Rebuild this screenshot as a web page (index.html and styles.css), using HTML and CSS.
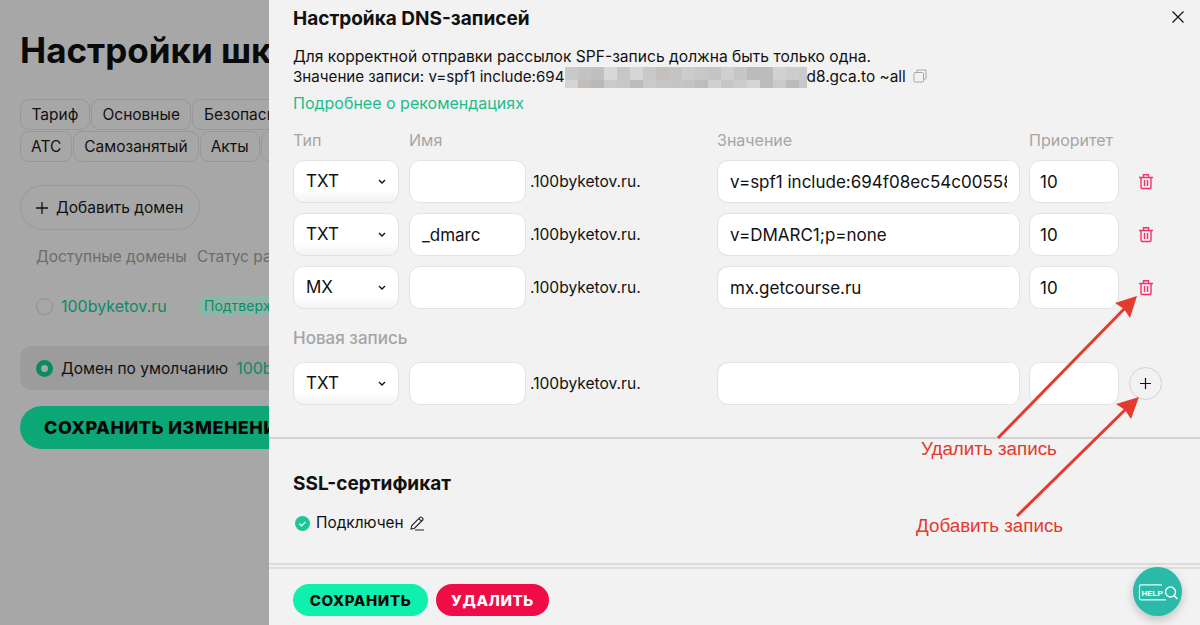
FILE: index.html
```html
<!DOCTYPE html>
<html lang="ru">
<head>
<meta charset="utf-8">
<title>Настройка DNS-записей</title>
<link rel="stylesheet" href="styles.css">
</head>
<body>
<div class="screen">
  <aside class="backdrop">
    <div class="backdrop-inner">
      <h1 class="page-title">Настройки школы</h1>
      <div class="chips">
        <div class="chip-row"><span class="chip">Тариф</span><span class="chip">Основные</span><span class="chip">Безопасность</span></div>
        <div class="chip-row"><span class="chip">АТС</span><span class="chip">Самозанятый</span><span class="chip">Акты</span><span class="chip">Домены</span></div>
      </div>
      <div class="add-domain"><svg width="12" height="12" viewBox="0 0 12 12"><path d="M6 0v12M0 6h12" stroke="#111" stroke-width="1.300"/></svg> Добавить домен</div>
      <div class="domain-head"><span class="domain-col">Доступные домены</span><span>Статус рассылок</span></div>
      <div class="domain-row">
        <span class="domain-col domain-name"><span class="radio"></span><span class="green-text">100byketov.ru</span></span>
        <span class="badge">Подтверждён</span>
      </div>
      <div class="default-row"><span class="radio radio-on"></span>Домен по умолчанию <span class="green-text">100byketov.ru</span></div>
      <div class="save-all">СОХРАНИТЬ ИЗМЕНЕНИЯ</div>
    </div>
  </aside>

  <main class="panel">
    <section class="dns">
      <h2 class="panel-title">Настройка DNS-записей</h2>
      <p class="note note-lead">Для корректной отправки рассылок SPF-запись должна быть только одна.</p>
      <p class="note">Значение записи: v=spf1 include:694<svg class="mosaic" width="242" height="21" viewBox="0 0 242 21" aria-hidden="true">
        <rect width="242" height="21" fill="#c8c8c8"/>
        <rect x="0" width="13" height="13" fill="#c9c9c9"/><rect x="13" width="13" height="13" fill="#c5c3c1"/><rect x="26" width="13" height="13" fill="#bfc0c0"/><rect x="39" width="13" height="13" fill="#d8d8d8"/><rect x="52" width="13" height="13" fill="#c9c7c5"/><rect x="65" width="13" height="13" fill="#d6d6d6"/><rect x="78" width="13" height="13" fill="#c8c9cb"/><rect x="91" width="13" height="13" fill="#c3c0be"/><rect x="104" width="13" height="13" fill="#c5c4c3"/><rect x="117" width="13" height="13" fill="#cccccc"/><rect x="130" width="13" height="13" fill="#c6c7c9"/><rect x="143" width="13" height="13" fill="#c4c5c7"/><rect x="156" width="13" height="13" fill="#d0cfcd"/><rect x="169" width="13" height="13" fill="#c5c6c6"/><rect x="182" width="13" height="13" fill="#bdbab8"/><rect x="195" width="13" height="13" fill="#bcbcbc"/><rect x="208" width="13" height="13" fill="#d2d2d2"/><rect x="221" width="13" height="13" fill="#cdcdcd"/><rect x="234" width="8" height="13" fill="#c8cacb"/>
        <rect x="0" y="13" width="13" height="8" fill="#d4d4d4"/><rect x="13" y="13" width="13" height="8" fill="#c0bdbb"/><rect x="26" y="13" width="13" height="8" fill="#b8b9b9"/><rect x="39" y="13" width="13" height="8" fill="#c8cacb"/><rect x="52" y="13" width="13" height="8" fill="#c8c8c8"/><rect x="65" y="13" width="13" height="8" fill="#bcbcbc"/><rect x="78" y="13" width="13" height="8" fill="#c8cacc"/><rect x="91" y="13" width="13" height="8" fill="#c8c6c4"/><rect x="104" y="13" width="13" height="8" fill="#c6c5c4"/><rect x="117" y="13" width="13" height="8" fill="#c2c3c3"/><rect x="130" y="13" width="13" height="8" fill="#bcbdbd"/><rect x="143" y="13" width="13" height="8" fill="#d0d0d0"/><rect x="156" y="13" width="13" height="8" fill="#c8c6c3"/><rect x="169" y="13" width="13" height="8" fill="#cccccc"/><rect x="182" y="13" width="13" height="8" fill="#d6d5d3"/><rect x="195" y="13" width="13" height="8" fill="#bcbcbc"/><rect x="208" y="13" width="13" height="8" fill="#c8cacb"/><rect x="221" y="13" width="13" height="8" fill="#bdbbb9"/><rect x="234" y="13" width="8" height="8" fill="#c8c8c8"/>
      </svg><span class="note-tail">d8.gca.to ~all</span><svg class="copy-icon" width="14" height="14" viewBox="0 0 14 14" aria-hidden="true"><path d="M4 3V1h9v9h-2" fill="none" stroke="#a9a9a9"/><rect x="1" y="3.500" width="9.500" height="9.500" rx="1" fill="none" stroke="#a9a9a9"/></svg></p>
      <a class="more-link" href="#">Подробнее о рекомендациях</a>

      <div class="dns-grid labels">
        <span>Тип</span><span>Имя</span><span>Значение</span><span>Приоритет</span><span></span>
      </div>

      <div class="dns-grid record">
        <div class="field select">TXT<svg class="chevron" width="8" height="5" viewBox="0 0 8 5"><path d="M1 1l3 3 3-3" fill="none" stroke="#111" stroke-width="1.400"/></svg></div>
        <div class="name-cell"><div class="field name"></div><span class="suffix">.100byketov.ru.</span></div>
        <div class="field value">v=spf1 include:694f08ec54c00558</div>
        <div class="field prio">10</div>
        <div class="action"><svg class="trash" width="14" height="16" viewBox="0 0 14 16"><path d="M0 3.500h14M4.500 3.500V.700h5v2.800M2 3.500v9.500a1.500 1.500 0 0 0 1.500 1.500h7a1.500 1.500 0 0 0 1.500-1.500V3.500M5.500 6v6M8.500 6v6" fill="none" stroke="#f5306a" stroke-width="1.400"/></svg></div>
      </div>
      <div class="dns-grid record">
        <div class="field select">TXT<svg class="chevron" width="8" height="5" viewBox="0 0 8 5"><path d="M1 1l3 3 3-3" fill="none" stroke="#111" stroke-width="1.400"/></svg></div>
        <div class="name-cell"><div class="field name">_dmarc</div><span class="suffix">.100byketov.ru.</span></div>
        <div class="field value">v=DMARC1;p=none</div>
        <div class="field prio">10</div>
        <div class="action"><svg class="trash" width="14" height="16" viewBox="0 0 14 16"><path d="M0 3.500h14M4.500 3.500V.700h5v2.800M2 3.500v9.500a1.500 1.500 0 0 0 1.500 1.500h7a1.500 1.500 0 0 0 1.500-1.500V3.500M5.500 6v6M8.500 6v6" fill="none" stroke="#f5306a" stroke-width="1.400"/></svg></div>
      </div>
      <div class="dns-grid record">
        <div class="field select">MX<svg class="chevron" width="8" height="5" viewBox="0 0 8 5"><path d="M1 1l3 3 3-3" fill="none" stroke="#111" stroke-width="1.400"/></svg></div>
        <div class="name-cell"><div class="field name"></div><span class="suffix">.100byketov.ru.</span></div>
        <div class="field value">mx.getcourse.ru</div>
        <div class="field prio">10</div>
        <div class="action"><svg class="trash" width="14" height="16" viewBox="0 0 14 16"><path d="M0 3.500h14M4.500 3.500V.700h5v2.800M2 3.500v9.500a1.500 1.500 0 0 0 1.500 1.500h7a1.500 1.500 0 0 0 1.500-1.500V3.500M5.500 6v6M8.500 6v6" fill="none" stroke="#f5306a" stroke-width="1.400"/></svg></div>
      </div>

      <div class="new-label">Новая запись</div>
      <div class="dns-grid record">
        <div class="field select">TXT<svg class="chevron" width="8" height="5" viewBox="0 0 8 5"><path d="M1 1l3 3 3-3" fill="none" stroke="#111" stroke-width="1.400"/></svg></div>
        <div class="name-cell"><div class="field name"></div><span class="suffix">.100byketov.ru.</span></div>
        <div class="field value"></div>
        <div class="field prio"></div>
        <div class="action"><span class="add-round"><svg width="11" height="11" viewBox="0 0 11 11"><path d="M5.500 0v11M0 5.500h11" stroke="#111" stroke-width="1.200"/></svg></span></div>
      </div>
    </section>

    <section class="ssl">
      <h3 class="ssl-title">SSL-сертификат</h3>
      <div class="ssl-status">
        <svg width="15" height="15" viewBox="0 0 15 15"><circle cx="7.500" cy="7.500" r="7.500" fill="#1cc795"/><path d="M4.500 7.800l2.100 2 3.900-4" fill="none" stroke="#fff" stroke-width="1.200"/></svg>
        <span>Подключен</span>
        <svg width="15" height="15" viewBox="0 0 15 15"><path d="M1 13l.8-3.500L10 1.300a1.200 1.200 0 0 1 1.700 0l1 1a1.200 1.200 0 0 1 0 1.700L4.500 12.200zM8.800 2.600l2.600 2.600M5 14h9" fill="none" stroke="#222" stroke-width="1.100"/></svg>
      </div>
    </section>

    <footer class="actions">
      <button class="btn btn-save">СОХРАНИТЬ</button>
      <button class="btn btn-delete">УДАЛИТЬ</button>
    </footer>
  </main>

  <button class="close" aria-label="Закрыть"><svg width="12" height="12" viewBox="0 0 12 12"><path d="M.5.500l11 11M11.500.500l-11 11" stroke="#111" stroke-width="1.200"/></svg></button>

  <svg class="arrows" width="1200" height="625" viewBox="0 0 1200 625" aria-hidden="true">
    <path d="M998 438L1127 306" stroke="#e53b2e" stroke-width="3" fill="none"/>
    <path d="M1137 296L1130 318L1124 309L1115 303Z" fill="#e53b2e"/>
    <path d="M1017 516L1130 405" stroke="#e53b2e" stroke-width="3" fill="none"/>
    <path d="M1139 397L1131 419L1125 410L1116 404Z" fill="#e53b2e"/>
  </svg>
  <span class="callout callout-del">Удалить запись</span>
  <span class="callout callout-add">Добавить запись</span>

  <button class="help" aria-label="Помощь">
    <svg width="40" height="24" viewBox="0 0 40 24"><path d="M24 4.800H3A1.500 1.500 0 0 0 1.500 6.300v12A1.500 1.500 0 0 0 3 19.800h25" fill="none" stroke="#e8fbf8" stroke-width="1.200"/><circle cx="32.500" cy="12" r="5" fill="none" stroke="#fff" stroke-width="1.400"/><path d="M36 15.500l3.500 3.500" stroke="#fff" stroke-width="1.400"/><text x="3.500" y="15.500" class="help-text">HELP</text></svg>
  </button>
</div>
</body>
</html>
```

FILE: styles.css
```css
* { box-sizing: border-box; }
html, body { margin: 0; height: 100%; }
body { font-family: Inter, "Noto Sans", sans-serif; color: #111; overflow: hidden; }
.screen { display: flex; width: 1200px; height: 625px; overflow: hidden; position: relative; }
h1, h2, h3, p { margin: 0; }

/* dimmed page behind the drawer */
.backdrop { width: 269px; flex: none; background: #a7a7a7; overflow: hidden; }
.backdrop-inner { width: 800px; padding: 29px 0 0 20px; font-size: 15.500px; white-space: nowrap; }
.page-title { font-size: 35px; line-height: 42px; font-weight: 700; color: #0a0a0a; }
.chips { margin-top: 28px; display: flex; flex-direction: column; gap: 1px; }
.chip-row { display: flex; gap: 1px; }
.chip { height: 31px; line-height: 29px; padding: 0 10px; border: 1px solid #979797; border-radius: 9px; }
.chip-row:first-child .chip { padding: 0 10.500px; }
.add-domain { margin-top: 23px; width: 180px; height: 45px; display: flex; align-items: center; gap: 8px; padding-left: 15px; border: 1px solid #999; border-radius: 23px; }
.domain-head { margin-top: 17px; display: flex; line-height: 20px; padding-left: 16px; color: #6c6c6c; }
.domain-col { width: 161px; flex: none; }
.domain-row { margin-top: 29px; display: flex; align-items: center; height: 20px; padding-left: 16px; }
.domain-name { display: flex; align-items: center; gap: 8px; }
.radio { width: 17px; height: 17px; flex: none; border: 1px solid #8f8f8f; border-radius: 50%; }
.radio-on { border: 5px solid #0c8a66; background: #a7a7a7; }
.green-text { color: #0d8a67; font-size: 16px; }
.badge { background: #8fb5a7; color: #0d8a67; height: 20px; line-height: 20px; padding: 0 7px; border-radius: 10px; font-size: 14px; }
.default-row { margin-top: 30px; width: 500px; height: 44px; display: flex; align-items: center; gap: 8px; padding-left: 16px; background: #9c9c9c; border-radius: 12px; }
.save-all { margin-top: 16px; width: 420px; height: 43px; line-height: 43px; padding-left: 24px; background: #0ca777; border-radius: 22px; font-size: 18px; font-weight: 800; letter-spacing: .5px; color: #050505; }

/* drawer */
.panel { flex: 1; height: 625px; background: #f2f2f2; display: flex; flex-direction: column; }
.dns { padding: 8px 0 32px 24px; border-bottom: 2px solid #d2d2d2; }
.panel-title { font-size: 19px; line-height: 22px; font-weight: 700; }
.note { font-size: 15.150px; line-height: 20px; height: 20px; white-space: nowrap; color: #111; }
.note-lead { font-size: 15.600px; margin-top: 17px; }
.note-tail { font-size: 15.400px; }
.mosaic { vertical-align: -6px; }
.copy-icon { margin-left: 7px; vertical-align: -1px; }
.more-link { display: block; margin-top: 6px; font-size: 16px; line-height: 20px; color: #1cbd8c; text-decoration: none; }
.dns-grid { display: grid; grid-template-columns: 106px 298px 302px 90px 33px; column-gap: 10px; }
.labels { margin-top: 17px; font-size: 16px; line-height: 20px; color: #a5a5a5; margin-bottom: 10px; }
.record { height: 43px; margin-bottom: 10px; }
.field { height: 43px; line-height: 43px; padding: 0 12px; background: #fff; border: 1px solid #e2e2e2; border-radius: 11px; font-size: 17px; overflow: hidden; white-space: nowrap; }
.select { display: flex; align-items: center; justify-content: space-between; padding-right: 12px; background: linear-gradient(#fff 70%, #f3f3f3); }
.prio { padding-left: 10px; }
.name-cell { display: flex; align-items: center; gap: 4px; }
.name { width: 117px; flex: none; }
.suffix { font-size: 15.600px; }
.value { padding-right: 0; border-right-width: 12px; border-right-color: #fff; box-shadow: 1px 0 0 #e2e2e2; }
.action { display: flex; align-items: center; justify-content: center; }
.trash { display: block; }
.add-round { width: 33px; height: 33px; display: flex; align-items: center; justify-content: center; border: 1px solid #d2d2d2; border-radius: 50%; }
.new-label { margin-top: 19px; margin-bottom: 14px; font-size: 17px; line-height: 20px; font-weight: 500; color: #a5a5a5; }
.new-label + .record { margin-bottom: 0; }

.ssl { padding: 33px 0 0 24px; border-bottom: 2px solid #dcdcdc; height: 126px; }
.ssl-title { font-size: 19px; line-height: 24px; font-weight: 700; }
.ssl-status { margin-top: 17px; display: flex; align-items: center; gap: 6px; font-size: 15.400px; line-height: 20px; padding-left: 2px; }
.actions { margin-top: 2px; border-top: 2px solid #dfdfdf; padding: 15px 0 0 24px; display: flex; gap: 8px; }
.btn { height: 32px; border: 0; border-radius: 16px; font-family: inherit; font-size: 15px; font-weight: 800; letter-spacing: .6px; }
.btn-save { width: 135px; background: #0ff0ae; color: #0a0a0a; }
.btn-delete { width: 113px; background: #f00d47; color: #fff; }

/* overlays */
.close { position: absolute; left: 1172px; top: 11px; padding: 0; border: 0; background: none; line-height: 0; }
.arrows { position: absolute; left: 0; top: 0; pointer-events: none; }
.callout { position: absolute; font-family: "Liberation Sans", Arial, sans-serif; font-size: 18.800px; line-height: 22px; color: #e5392c; white-space: nowrap; }
.callout-del { left: 921px; top: 438px; }
.callout-add { left: 916px; top: 515px; }
.help { position: absolute; left: 1133px; top: 567px; width: 49px; height: 49px; padding: 0; border: 0; border-radius: 50%; background: #2bb9a9; box-shadow: 0 4px 10px rgba(0,0,0,.2); display: flex; align-items: center; justify-content: center; }
.help-text { font-family: "Liberation Sans", Arial, sans-serif; font-size: 8px; font-weight: 700; fill: #fff; }
```
